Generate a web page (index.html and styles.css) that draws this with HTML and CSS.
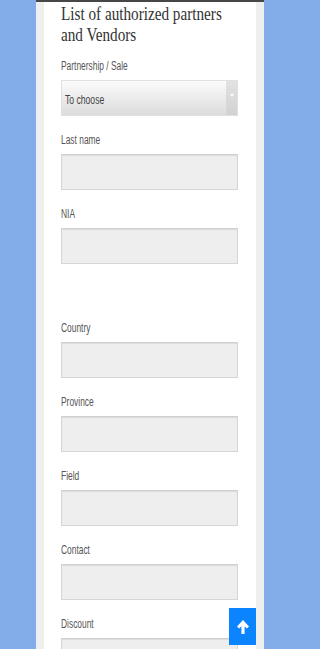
FILE: index.html
```html
<!DOCTYPE html>
<html>
<head>
<meta charset="utf-8">
<link rel="stylesheet" href="styles.css">
</head>
<body>
<div class="page">
  <div class="card">
    <h1 class="title">List of authorized partners and Vendors</h1>
    <div class="field">
      <label class="label">Partnership / Sale</label>
      <div class="select"><span class="select-text">To choose</span><span class="select-btn"><span class="tri"></span></span></div>
    </div>
    <div class="field">
      <label class="label">Last name</label>
      <div class="input"></div>
    </div>
    <div class="field field-gap">
      <label class="label">NIA</label>
      <div class="input"></div>
    </div>
    <div class="field">
      <label class="label">Country</label>
      <div class="input"></div>
    </div>
    <div class="field">
      <label class="label">Province</label>
      <div class="input"></div>
    </div>
    <div class="field">
      <label class="label">Field</label>
      <div class="input"></div>
    </div>
    <div class="field">
      <label class="label">Contact</label>
      <div class="input"></div>
    </div>
    <div class="field">
      <label class="label">Discount</label>
      <div class="input"></div>
    </div>
  </div>
</div>
<a class="totop" href="#"><svg width="14" height="16" viewBox="0 0 14 16"><path d="M7 1 L13 7.5 L10.8 9.6 L8.6 7.3 L8.6 15 L5.4 15 L5.4 7.3 L3.2 9.6 L1 7.5 Z" fill="#fff"/></svg></a>
</body>
</html>
```
FILE: styles.css
```css
html, body {
  margin: 0;
  padding: 0;
  background: #82ade8;
}
body {
  width: 300px;
  overflow: hidden;
}
.page {
  width: 212px;
  margin-left: 36px;
  background: #efefef;
  border-top: 2px solid #474747;
  padding: 0 8px;
}
.card {
  background: #fff;
  padding: 0 18px 40px 17px;
  overflow: hidden;
}
.title {
  margin: 0 0 13px 0;
  padding-top: 1px;
  width: 125%;
  transform: scaleX(0.8);
  transform-origin: left top;
  font-family: "Liberation Serif", "DejaVu Serif", serif;
  font-weight: normal;
  font-size: 19px;
  line-height: 21px;
  color: #333;
}
.field {
  margin-bottom: 16px;
}
.field-gap {
  margin-bottom: 56px;
}
.label {
  display: block;
  font-family: "Liberation Sans", Arial, sans-serif;
  font-size: 12px;
  line-height: 16px;
  color: #555;
  margin-bottom: 6px;
  transform: scaleX(0.7);
  transform-origin: left center;
}
.input {
  height: 34px;
  background: #eeeeee;
  border: 1px solid #d6d6d6;
  border-top-color: #cfcfcf;
  box-shadow: inset 0 1px 1px rgba(0,0,0,0.08);
}
.select {
  height: 34px;
  display: flex;
  border: 1px solid #e0e0e0;
  background: linear-gradient(#fbfbfb, #dcdcdc);
}
.select-text {
  flex: 1;
  font-family: "Liberation Sans", Arial, sans-serif;
  font-size: 12px;
  color: #444;
  line-height: 34px;
  padding-left: 4px;
  padding-top: 2px;
  transform: scaleX(0.72);
  transform-origin: left center;
}
.select-btn {
  width: 11px;
  background: linear-gradient(#e2e2e2, #d2d2d2);
  display: flex;
  align-items: center;
  justify-content: center;
}
.tri {
  width: 0;
  height: 0;
  border-left: 2px solid transparent;
  border-right: 2px solid transparent;
  border-top: 3px solid #fff;
  margin-top: -6px;
}
.totop {
  position: fixed;
  left: 229px;
  bottom: 4px;
  width: 27px;
  height: 37px;
  background: #0a84ff;
  display: flex;
  align-items: center;
  justify-content: center;
}
```
